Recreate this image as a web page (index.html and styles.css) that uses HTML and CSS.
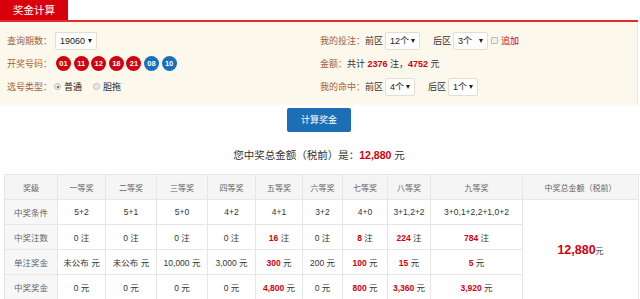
FILE: index.html
```html
<!DOCTYPE html>
<html lang="zh-CN">
<head>
<meta charset="utf-8">
<title>奖金计算</title>
<link rel="stylesheet" href="styles.css">
</head>
<body>
<div class="wrap">
  <div class="tabbar"><span class="tab">奖金计算</span></div>
  <div class="panel">
    <div class="col">
      <div class="row">
        <span class="lbl">查询期数：</span>
        <span class="sel w42"><span>19060</span><i class="arr"></i></span>
      </div>
      <div class="row">
        <span class="lbl">开奖号码：</span>
        <span class="balls">
          <span class="ball red">01</span><span class="ball red">11</span><span class="ball red">12</span><span class="ball red">18</span><span class="ball red">21</span><span class="ball blue">08</span><span class="ball blue">10</span>
        </span>
      </div>
      <div class="row">
        <span class="lbl">选号类型：</span>
        <span class="radio on"></span><span class="opt">普通</span>
        <span class="radio gap"></span><span class="opt">胆拖</span>
      </div>
    </div>
    <div class="col">
      <div class="row">
        <span class="lbl">我的投注：</span>
        <span class="txt">前区</span>
        <span class="sel w35"><span>12个</span><i class="arr"></i></span>
        <span class="txt sp">后区</span>
        <span class="sel w35"><span>3个</span><i class="arr"></i></span>
        <span class="chk"></span><span class="add">追加</span>
      </div>
      <div class="row">
        <span class="lbl">金额：</span>
        <span class="txt amt">共计 <b>2376</b> 注，<b>4752</b> 元</span>
      </div>
      <div class="row">
        <span class="lbl">我的命中：</span>
        <span class="txt">前区</span>
        <span class="sel w30"><span>4个</span><i class="arr"></i></span>
        <span class="txt sp">后区</span>
        <span class="sel w30"><span>1个</span><i class="arr"></i></span>
      </div>
    </div>
  </div>
  <div class="btnrow"><span class="btn">计算奖金</span></div>
  <div class="result">您中奖总金额（税前）是：<b>12,880</b> 元</div>
  <table class="tbl">
    <colgroup>
      <col style="width:53px"><col style="width:48px"><col style="width:51px"><col style="width:51px"><col style="width:48px"><col style="width:47px"><col style="width:40px"><col style="width:45px"><col style="width:43px"><col style="width:92px"><col style="width:116px">
    </colgroup>
    <thead>
      <tr><th>奖级</th><th>一等奖</th><th>二等奖</th><th>三等奖</th><th>四等奖</th><th>五等奖</th><th>六等奖</th><th>七等奖</th><th>八等奖</th><th>九等奖</th><th>中奖总金额（税前）</th></tr>
    </thead>
    <tbody>
      <tr><th>中奖条件</th><td>5+2</td><td>5+1</td><td>5+0</td><td>4+2</td><td>4+1</td><td>3+2</td><td>4+0</td><td>3+1,2+2</td><td>3+0,1+2,2+1,0+2</td><td rowspan="4" class="total"><b>12,880</b><span>元</span></td></tr>
      <tr><th>中奖注数</th><td>0 注</td><td>0 注</td><td>0 注</td><td>0 注</td><td><b>16</b> 注</td><td>0 注</td><td><b>8</b> 注</td><td><b>224</b> 注</td><td><b>784</b> 注</td></tr>
      <tr><th>单注奖金</th><td>未公布 元</td><td>未公布 元</td><td>10,000 元</td><td>3,000 元</td><td><b>300</b> 元</td><td>200 元</td><td><b>100</b> 元</td><td><b>15</b> 元</td><td><b>5</b> 元</td></tr>
      <tr><th>中奖奖金</th><td>0 元</td><td>0 元</td><td>0 元</td><td>0 元</td><td><b>4,800</b> 元</td><td>0 元</td><td><b>800</b> 元</td><td><b>3,360</b> 元</td><td><b>3,920</b> 元</td></tr>
    </tbody>
  </table>
</div>
</body>
</html>
```
FILE: styles.css
```css
* { box-sizing: border-box; }
body {
  margin: 0;
  background: #fff;
  font-family: "Liberation Sans", "Noto Sans CJK SC", sans-serif;
  color: #333;
}
.wrap { width: 638px; }
.tabbar {
  height: 22px;
  border-bottom: 2px solid #e3292b;
  display: flex;
}
.tab {
  width: 68px;
  height: 20px;
  background: #d9000d;
  color: #fff;
  font-size: 10.5px;
  line-height: 20px;
  text-align: center;
}
.panel {
  background: #fdf8ec;
  border-right: 1px solid #efe6d6;
  padding: 7px 0 7px 7px;
  display: grid;
  grid-template-columns: 313px 1fr;
}
.row {
  height: 23px;
  display: flex;
  align-items: center;
  font-size: 9px;
  white-space: nowrap;
}
.lbl { color: #a0623f; }
.txt { color: #333; }
.txt.sp { margin-left: 13px; }
.amt b { color: #d3000e; font-weight: bold; }
.sel {
  height: 18px;
  background: #fff;
  border: 1px solid #e3ddd3;
  border-radius: 2px;
  display: flex;
  align-items: center;
  justify-content: space-between;
  padding: 0 4px 0 4px;
  margin-left: 2px;
  color: #222;
}
.w42 { width: 42px; margin-left: 3px; }
.w35 { width: 35px; }
.w30 { width: 30px; }
.arr {
  width: 0; height: 0;
  border-left: 2.5px solid transparent;
  border-right: 2.5px solid transparent;
  border-top: 4px solid #222;
}
.balls { display: flex; margin-left: 4px; }
.ball {
  width: 15px; height: 15px;
  border-radius: 50%;
  color: #fff;
  font-size: 7.5px;
  font-weight: bold;
  display: flex;
  align-items: center;
  justify-content: center;
  margin-right: 2.6px;
}
.ball.red { background: #d2000f; }
.ball.blue { background: #1670bd; }
.radio {
  width: 7px; height: 7px;
  border-radius: 50%;
  border: 1px solid #bdbdbd;
  background: #e9e9e9;
  margin: 0 3px 0 2px;
  position: relative;
}
.radio.on::after {
  content: "";
  position: absolute;
  left: 1.5px; top: 1.5px;
  width: 2px; height: 2px;
  border-radius: 50%;
  background: #555;
}
.radio.gap { margin-left: 11px; }
.opt { color: #222; }
.chk {
  width: 7px; height: 7px;
  border: 1px solid #bcbcbc;
  background: #f0f0f0;
  margin: 0 3px 0 3px;
  border-radius: 1px;
}
.add { color: #d3000e; }
.btnrow {
  display: flex;
  justify-content: center;
  padding-top: 3px;
}
.btn {
  width: 64px;
  height: 24px;
  background: #1c6fb6;
  color: #fff;
  border-radius: 2px;
  font-size: 9px;
  line-height: 24px;
  text-align: center;
}
.result {
  text-align: center;
  font-size: 10.5px;
  line-height: 18px;
  padding: 14px 0 10px;
  color: #333;
}
.result b { color: #d3000e; font-weight: bold; }
.tbl {
  margin-left: 4px;
  width: 634px;
  table-layout: fixed;
  border-collapse: collapse;
  font-size: 8.5px;
}
.tbl th, .tbl td {
  border: 1px solid #e6e6e6;
  height: 25px;
  padding: 0;
  text-align: center;
  font-weight: normal;
  white-space: nowrap;
}
.tbl thead th { background: #f5f5f5; color: #666; font-size: 8px; }
.tbl tbody th { background: #f7f7f7; color: #666; }
.tbl td { color: #333; background: #fff; }
.tbl td b { color: #d3000e; font-weight: bold; }
.tbl td.total b { font-size: 12.5px; }
.tbl td.total span { font-size: 8px; color: #333; }
```
